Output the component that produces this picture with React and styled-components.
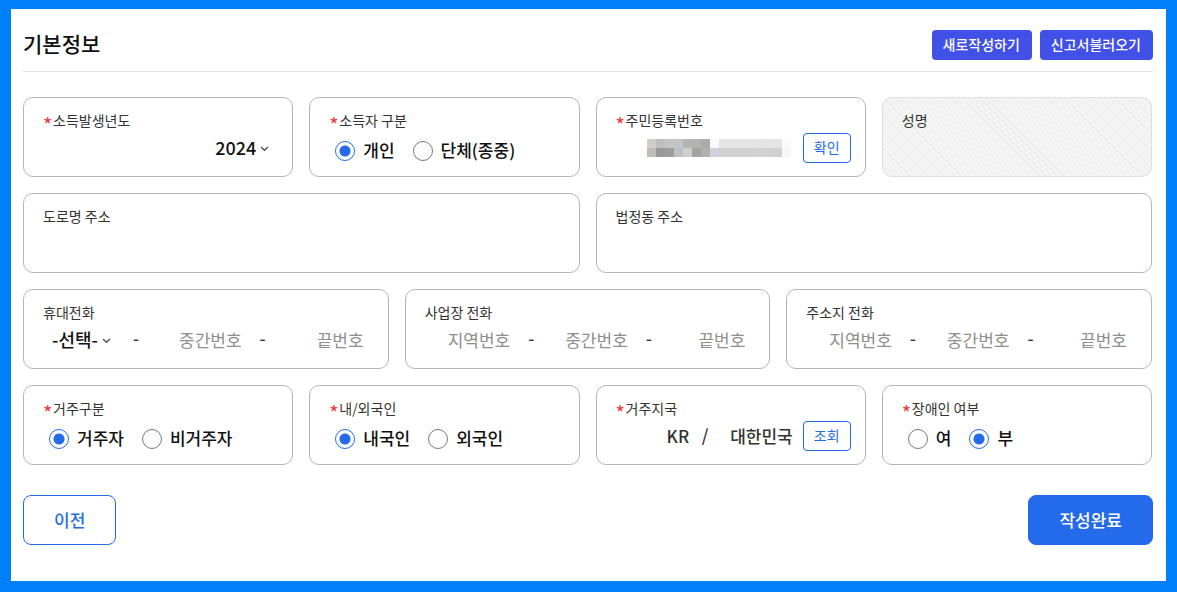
import React, { useState } from "react";
import styled, { createGlobalStyle, css } from "styled-components";

const BLUE = "#246beb";

const GlobalStyle = createGlobalStyle`
  *, *::before, *::after { box-sizing: border-box; }
  body { margin: 0; background: #0080f8; }
  body, button, input, select {
    font-family: "Noto Sans CJK KR", "Noto Sans", sans-serif;
    color: #111;
  }
`;

const Frame = styled.div`
  min-height: 100vh;
  padding: 9px 11px 11px;
  background: #0080f8;
  display: flex;
`;

const Page = styled.main`
  flex: 1;
  min-width: 0;
  background: #fff;
  padding: 0 13px 36px 12px;
`;

const Header = styled.header`
  display: flex;
  align-items: center;
  justify-content: space-between;
  padding: 21px 0 11px;
  border-bottom: 1px solid #e3e3e3;
`;

const Title = styled.h1`
  margin: 0;
  padding-bottom: 4px;
  font-size: 21px;
  line-height: 26px;
  font-weight: 500;
  color: #111;
`;

const HeaderActions = styled.div`
  display: flex;
  gap: 8px;
`;

const HeaderButton = styled.button`
  height: 30px;
  padding: 0 12px 2px 11px;
  border: 0;
  border-radius: 4px;
  background: #4150e6;
  color: #fff;
  font-size: 14px;
  line-height: 20px;
  font-weight: 500;
`;

const Form = styled.form`
  display: flex;
  flex-direction: column;
  gap: 16px;
  padding-top: 25px;
`;

const Row = styled.div`
  display: grid;
  grid-template-columns: repeat(${(p) => p.$columns}, minmax(0, 1fr));
  gap: 16px;
  padding-right: 1px;
`;

const Card = styled.fieldset`
  display: flex;
  flex-direction: column;
  min-width: 0;
  min-height: 80px;
  margin: 0;
  padding: 12px 14px 10px 19px;
  border: 1px solid #b5b5b5;
  border-radius: 10px;
  background: #fff;
  ${(p) =>
    p.$disabled &&
    css`
      border-color: #dcdee3;
      background: repeating-linear-gradient(45deg, #f4f4f4 0 3px, #ededee 3px 4px);
    `}
`;

const Caption = styled.label`
  display: flex;
  align-items: center;
  font-size: 14px;
  line-height: 20px;
  color: #333;
`;

const Star = styled.span`
  width: 10px;
  padding-top: 10px;
  font-size: 20px;
  line-height: 10px;
  color: #f0353a;
`;

const Body = styled.div`
  display: flex;
  align-items: center;
  justify-content: ${(p) => (p.$end ? "flex-end" : "flex-start")};
  height: 36px;
`;

const RadioList = styled.div`
  display: flex;
  align-items: center;
  gap: 18px;
  padding: 9px 0 0 6px;
`;

const RadioLabel = styled.label`
  display: flex;
  align-items: center;
  gap: 8px;
  font-size: 17px;
  line-height: 22px;
  font-weight: 500;
`;

const RadioText = styled.span`
  padding-bottom: 2px;
`;

const Radio = styled.input`
  appearance: none;
  width: 20px;
  height: 20px;
  margin: 0;
  border: 1px solid #777;
  border-radius: 50%;
  background: #fff;
  &:checked {
    border-color: ${BLUE};
    background: radial-gradient(circle, ${BLUE} 5px, #fff 6px);
  }
`;

const SelectBox = styled.span`
  display: flex;
  align-items: center;
  gap: 4px;
  padding: 0 9px;
  ${(p) => p.$wide && "width: 82px;"}
`;

const Select = styled.select`
  appearance: none;
  field-sizing: content;
  border: 0;
  padding: 0 0 2px;
  background: transparent;
  font-size: 18px;
  line-height: 24px;
  font-weight: 500;
`;

const TextInput = styled.input`
  flex: ${(p) => p.$grow || 1} 1 0;
  min-width: 0;
  height: 30px;
  padding: 0 10px 2px 0;
  border: 0;
  outline: 0;
  background: transparent;
  font-size: 17px;
  line-height: 24px;
  font-weight: ${(p) => (p.readOnly ? 500 : 400)};
  color: #333;
  text-align: right;
  &::placeholder { color: #8e8e8e; opacity: 1; }
`;

const Separator = styled.span`
  width: ${(p) => (p.$narrow ? 12 : 22)}px;
  padding-bottom: ${(p) => (p.$narrow ? 2 : 4)}px;
  text-align: center;
  font-size: 17px;
  line-height: 24px;
  font-weight: 500;
  color: #333;
`;

const SmallButton = styled.button`
  flex: none;
  width: 48px;
  height: 30px;
  padding: 0 0 2px;
  border: 1px solid ${BLUE};
  border-radius: 4px;
  background: #fff;
  color: ${BLUE};
  font-size: 14px;
  line-height: 20px;
`;

const Mosaic = styled.svg`
  flex: none;
  margin-right: 12px;
`;

const Footer = styled.footer`
  display: flex;
  justify-content: space-between;
  padding-top: 14px;
`;

const FooterButton = styled.button`
  height: 50px;
  padding: 0 30px;
  border: 1px solid ${BLUE};
  border-radius: 8px;
  background: ${(p) => (p.$primary ? BLUE : "#fff")};
  color: ${(p) => (p.$primary ? "#fff" : BLUE)};
  font-size: 17px;
  line-height: 24px;
  font-weight: 500;
`;

const Chevron = () => (
  <svg width="9" height="9" viewBox="0 0 9 9" fill="none" stroke="#555" strokeWidth="1.5" aria-hidden="true">
    <path d="M1 3 L4.5 6.2 L8 3" />
  </svg>
);

function Field({ label, required, disabled, htmlFor, children }) {
  return (
    <Card $disabled={disabled} aria-label={label}>
      <Caption as={htmlFor ? "label" : "span"} htmlFor={htmlFor}>
        {required && <Star>*</Star>}
        {label}
      </Caption>
      {children}
    </Card>
  );
}

function RadioField({ label, name, options, initial }) {
  const [value, setValue] = useState(initial);
  return (
    <Field label={label} required>
      <RadioList>
        {options.map((o) => (
          <RadioLabel key={o}>
            <Radio type="radio" name={name} checked={value === o} onChange={() => setValue(o)} />
            <RadioText>{o}</RadioText>
          </RadioLabel>
        ))}
      </RadioList>
    </Field>
  );
}

function TextField({ label, id, disabled }) {
  return (
    <Field label={label} htmlFor={id} disabled={disabled}>
      <Body>
        <TextInput id={id} disabled={disabled} />
      </Body>
    </Field>
  );
}

function PhoneField({ label, id }) {
  return (
    <Field label={label} htmlFor={id}>
      <Body>
        <TextInput id={id} placeholder="지역번호" />
        <Separator>-</Separator>
        <TextInput placeholder="중간번호" aria-label={`${label} 중간번호`} />
        <Separator>-</Separator>
        <TextInput placeholder="끝번호" aria-label={`${label} 끝번호`} />
      </Body>
    </Field>
  );
}

const MOSAIC_ROWS = [
  ["#d0ccc9", "#bfbfc0", "#c4c6c6", "#c2c3c6", "#b3b4b3", "#b3b3b3", "#adaba7", "#f8fafe", "#e4e4e4", "#e4e4e4", "#e4e4e4", "#e4e4e4", "#e5e5e5", "#e5e5e5", "#e4e4e4", "#f9fafd"],
  ["#c1bcba", "#999", "#9f9e9c", "#bfc0c5", "#cfcfcf", "#a3a3a3", "#b3afaa", "#ced4df", "#d0d0cf", "#d0d0cf", "#d0d0d0", "#d0d0d0", "#d3d3d3", "#d0d0d0", "#d0d0d0", "#f3f6fc"],
];

export default function App() {
  return (
    <Frame>
      <GlobalStyle />
      <Page>
        <Header>
          <Title>기본정보</Title>
          <HeaderActions>
            <HeaderButton type="button">새로작성하기</HeaderButton>
            <HeaderButton type="button">신고서불러오기</HeaderButton>
          </HeaderActions>
        </Header>

        <Form onSubmit={(e) => e.preventDefault()}>
          <Row $columns={4}>
            <Field label="소득발생년도" required htmlFor="year">
              <Body $end>
                <SelectBox>
                  <Select id="year" defaultValue="2024">
                    <option>2024</option>
                  </Select>
                  <Chevron />
                </SelectBox>
              </Body>
            </Field>
            <RadioField label="소득자 구분" name="earner" options={["개인", "단체(종중)"]} initial="개인" />
            <Field label="주민등록번호" required>
              <Body $end>
                <Mosaic width="144" height="18" shapeRendering="crispEdges" aria-hidden="true">
                  {MOSAIC_ROWS.map((row, y) =>
                    row.map((fill, x) => (
                      <rect key={`${x}-${y}`} x={x * 9} y={y * 9} width="9" height="9" fill={fill} />
                    ))
                  )}
                </Mosaic>
                <SmallButton type="button">확인</SmallButton>
              </Body>
            </Field>
            <TextField label="성명" id="name" disabled />
          </Row>

          <Row $columns={2}>
            <TextField label="도로명 주소" id="road" />
            <TextField label="법정동 주소" id="district" />
          </Row>

          <Row $columns={3}>
            <Field label="휴대전화" htmlFor="mobile">
              <Body>
                <SelectBox $wide>
                  <Select id="mobile">
                    <option>-선택-</option>
                  </Select>
                  <Chevron />
                </SelectBox>
                <Separator>-</Separator>
                <TextInput $grow={21} placeholder="중간번호" aria-label="휴대전화 중간번호" />
                <Separator>-</Separator>
                <TextInput $grow={20} placeholder="끝번호" aria-label="휴대전화 끝번호" />
              </Body>
            </Field>
            <PhoneField label="사업장 전화" id="office" />
            <PhoneField label="주소지 전화" id="home" />
          </Row>

          <Row $columns={4}>
            <RadioField label="거주구분" name="residence" options={["거주자", "비거주자"]} initial="거주자" />
            <RadioField label="내/외국인" name="nationality" options={["내국인", "외국인"]} initial="내국인" />
            <Field label="거주지국" required htmlFor="country">
              <Body>
                <TextInput id="country" $grow={9} readOnly value="KR" />
                <Separator $narrow>/</Separator>
                <TextInput $grow={10} readOnly value="대한민국" aria-label="국가명" />
                <SmallButton type="button">조회</SmallButton>
              </Body>
            </Field>
            <RadioField label="장애인 여부" name="disability" options={["여", "부"]} initial="부" />
          </Row>

          <Footer>
            <FooterButton type="button">이전</FooterButton>
            <FooterButton type="submit" $primary>작성완료</FooterButton>
          </Footer>
        </Form>
      </Page>
    </Frame>
  );
}
